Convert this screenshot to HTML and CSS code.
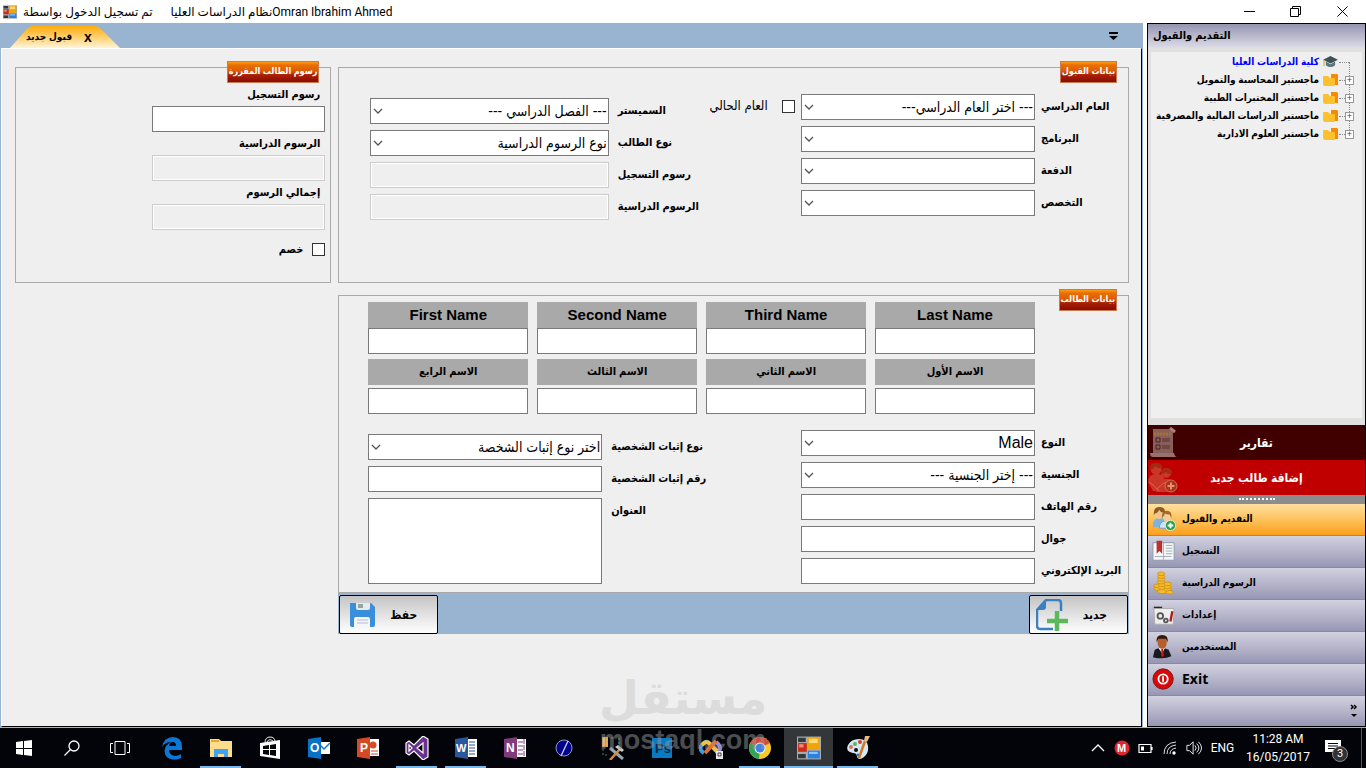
FILE: index.html
```html
<!DOCTYPE html>
<html lang="ar">
<head>
<meta charset="utf-8">
<title>نظام الدراسات العليا</title>
<link rel="stylesheet" href="styles.css">
</head>
<body>
<svg class="defs" aria-hidden="true">
  <defs>
    <symbol id="chevron" viewBox="0 0 10 6"><path d="M1 1l4 4 4-4" fill="none" stroke="#555" stroke-width="1.3"/></symbol>
    <symbol id="forms" viewBox="0 0 22 21">
      <path d="M0 0h22v21H0z" fill="#a8aaac"/><path d="M1 1h7v4H1zM1 16h7v4H1z" fill="#33383c"/>
      <path d="M1 6h8v8H1z" fill="#cf2b12"/><path d="M2 7h4v3H2z" fill="#f08a74"/>
      <path d="M10 1h11v11H10z" fill="#f0a40c"/><path d="M11 2h8v4h-8z" fill="#ffdb76"/>
      <path d="M10 13h11v7H10z" fill="#2d7fe0"/><path d="M11 14h8v2h-8z" fill="#8cc4ff"/>
    </symbol>
    <symbol id="folder" viewBox="0 0 15 12"><path d="M8 0h6l1 1v10h-7z" fill="#f58a07"/><path d="M0 3q0-1 1-1h4l2 2h4q1 0 1 1v6q0 1-1 1H2q-2 0-2-2z" fill="#ffc02d"/></symbol>
    <symbol id="people" viewBox="0 0 26 26">
      <path d="M1 19q0-6 6-7h4q5 1 5 8l-3 2H1z" fill="#7fb2dc"/><path d="M8 23q0-7 6-8h3q6 1 6 8z" fill="#cfe5f7" stroke="#6e9fcd"/>
      <ellipse cx="8" cy="7" rx="4.500" ry="6" fill="#f3c58d"/><path d="M2 9Q1 0 8 0t6 7l-2-1q-3 0-4-3-2 4-5 4z" fill="#8d5b20"/>
      <ellipse cx="16" cy="11" rx="4" ry="5" fill="#f6cc98"/><path d="M11 12q-1-8 5-8t5 8l-2-4q-4 0-5-1-1 3-3 5z" fill="#a2692a"/>
      <circle cx="20" cy="20" r="5.500" fill="#26a148" stroke="#d9f2d9"/><path d="M17 20h6M20 17v6" stroke="#fff" stroke-width="2"/>
    </symbol>
  </defs>
</svg>

<header class="titlebar">
  <svg class="app-icon"><use href="#forms"/></svg>
  <span class="title-user" dir="rtl">تم تسجيل الدخول بواسطة</span>
  <h1 class="title-name"><bdi>نظام الدراسات العليا</bdi><span>Omran Ibrahim Ahmed</span></h1>
  <div class="window-controls">
    <button type="button" aria-label="Minimize"><svg viewBox="0 0 11 11"><path d="M0 5.500h11" stroke="#000"/></svg></button>
    <button type="button" aria-label="Restore"><svg viewBox="0 0 11 11"><path d="M.5 2.500h8v8h-8zM2.500 2.500v-2h8v8h-2" fill="none" stroke="#000"/></svg></button>
    <button type="button" aria-label="Close"><svg viewBox="0 0 11 11"><path d="M.5.500l10 10M10.500.500l-10 10" stroke="#000"/></svg></button>
  </div>
</header>

<div class="workspace">
  <main class="document">
    <div class="tabstrip">
      <div class="tab">
        <svg class="tab-shape" viewBox="0 0 110 22" preserveAspectRatio="none" aria-hidden="true">
          <defs><linearGradient id="tabfill" x2="0" y2="1"><stop offset="0" stop-color="#ffab0c"/><stop offset=".45" stop-color="#ffcb62"/><stop offset="1" stop-color="#fff5da"/></linearGradient></defs>
          <path d="M0 22L17 3q3-3 6-3h62q3 0 6 3l19 19z" fill="url(#tabfill)"/>
        </svg>
        <span dir="rtl">قبول جديد</span>
        <button type="button" aria-label="إغلاق">x</button>
      </div>
      <button type="button" class="tab-menu" aria-label="القائمة"><svg viewBox="0 0 9 8"><path d="M0 1h9" stroke="#000" stroke-width="2"/><path d="M0 4h9L4.500 8z"/></svg></button>
    </div>

    <form class="page" dir="rtl">
      <fieldset class="group admission">
        <legend>بيانات القبول</legend>
        <div class="rows side">
          <label for="year">العام الدراسي</label>
          <div class="combo"><select id="year"><option>--- اختر العام الدراسي---</option></select><svg><use href="#chevron"/></svg></div>
          <label for="program">البرنامج</label>
          <div class="combo"><select id="program"><option></option></select><svg><use href="#chevron"/></svg></div>
          <label for="batch">الدفعة</label>
          <div class="combo"><select id="batch"><option></option></select><svg><use href="#chevron"/></svg></div>
          <label for="major">التخصص</label>
          <div class="combo"><select id="major"><option></option></select><svg><use href="#chevron"/></svg></div>
        </div>
        <label class="check current-year"><input type="checkbox">العام الحالي</label>
        <div class="rows term">
          <label for="semester">السميستر</label>
          <div class="combo"><select id="semester"><option>--- الفصل الدراسي ---</option></select><svg><use href="#chevron"/></svg></div>
          <label for="kind">نوع الطالب</label>
          <div class="combo"><select id="kind"><option>نوع الرسوم الدراسية</option></select><svg><use href="#chevron"/></svg></div>
          <label for="regfee">رسوم التسجيل</label>
          <input id="regfee" type="text" disabled>
          <label for="studyfee">الرسوم الدراسية</label>
          <input id="studyfee" type="text" disabled>
        </div>
      </fieldset>

      <fieldset class="group fees">
        <legend>رسوم الطالب المقررة</legend>
        <label for="fee1">رسوم التسجيل</label>
        <input id="fee1" type="text">
        <label for="fee2">الرسوم الدراسية</label>
        <input id="fee2" type="text" disabled>
        <label for="fee3">إجمالي الرسوم</label>
        <input id="fee3" type="text" disabled>
        <label class="check discount"><input type="checkbox">خصم</label>
      </fieldset>

      <div class="student-block">
        <fieldset class="group student">
          <legend>بيانات الطالب</legend>
          <div class="names">
            <div class="name"><label for="en4">Last Name</label><input id="en4" type="text"></div>
            <div class="name"><label for="en3">Third Name</label><input id="en3" type="text"></div>
            <div class="name"><label for="en2">Second Name</label><input id="en2" type="text"></div>
            <div class="name"><label for="en1">First Name</label><input id="en1" type="text"></div>
            <div class="name spaced"><label for="ar1">الاسم الأول</label><input id="ar1" type="text"></div>
            <div class="name spaced"><label for="ar2">الاسم الثاني</label><input id="ar2" type="text"></div>
            <div class="name spaced"><label for="ar3">الاسم الثالث</label><input id="ar3" type="text"></div>
            <div class="name spaced"><label for="ar4">الاسم الرابع</label><input id="ar4" type="text"></div>
          </div>
          <div class="details">
            <div class="rows side">
              <label for="gender">النوع</label>
              <div class="combo"><select id="gender" class="latin"><option>Male</option></select><svg><use href="#chevron"/></svg></div>
              <label for="nation">الجنسية</label>
              <div class="combo"><select id="nation"><option>--- إختر الجنسية ---</option></select><svg><use href="#chevron"/></svg></div>
              <label for="phone">رقم الهاتف</label>
              <input id="phone" type="text">
              <label for="mobile">جوال</label>
              <input id="mobile" type="text">
              <label for="email">البريد الإلكتروني</label>
              <input id="email" type="text">
            </div>
            <div class="rows identity">
              <label for="idkind">نوع إثبات الشخصية</label>
              <div class="combo"><select id="idkind"><option>اختر نوع إثبات الشخصة</option></select><svg><use href="#chevron"/></svg></div>
              <label for="idnum">رقم إثبات الشخصية</label>
              <input id="idnum" type="text">
              <label for="address">العنوان</label>
              <textarea id="address"></textarea>
            </div>
          </div>
        </fieldset>
        <div class="actions">
          <button type="button"><span>جديد</span>
            <svg viewBox="0 0 32 32"><path d="M17 30H4q-3 0-3-3V11L10 1h12q3 0 3 3v8" fill="none" stroke="#3a80c4" stroke-width="2.500"/><path d="M1 11L10 1v7q0 3-3 3z" fill="#3a80c4"/><path d="M21 12v20M11 22h21" stroke="#5cb85c" stroke-width="4.500"/></svg>
          </button>
          <button type="button"><span>حفظ</span>
            <svg viewBox="0 0 32 32"><path d="M4 4h21l4 4v18q0 2-2 2H6q-2 0-2-2z" fill="#3a8fdd"/><path d="M10 4h14v5q0 2-2 2H12q-2 0-2-2z" fill="#e4ebea"/><path d="M12 5h5v4h-5z" fill="#92a5a3"/><path d="M8 28V20q0-2 2-2h12q2 0 2 2v8z" fill="#f3f5f6"/><path d="M11 21h11M11 24h11" stroke="#bbc"/></svg>
          </button>
        </div>
      </div>
    </form>
  </main>

  <aside class="sidebar">
    <h2 dir="rtl">التقديم والقبول</h2>
    <ul class="tree" dir="rtl">
      <li class="root"><i></i><svg class="hat" viewBox="0 0 16 13"><path d="M0 4l8-4 8 4-8 4z" fill="#3c5256"/><path d="M3 6l5 3 5-3v4q-5 4-10 0z" fill="#57777c"/><path d="M1 4v7" stroke="#d09b3c"/></svg><a href="#">كلية الدراسات العليا</a></li>
      <li><button type="button" aria-label="توسيع">+</button><svg><use href="#folder"/></svg><span>ماجستير المحاسبة والتمويل</span></li>
      <li><button type="button" aria-label="توسيع">+</button><svg><use href="#folder"/></svg><span>ماجستير المختبرات الطبية</span></li>
      <li><button type="button" aria-label="توسيع">+</button><svg><use href="#folder"/></svg><span>ماجستير الدراسات المالية والمصرفية</span></li>
      <li><button type="button" aria-label="توسيع">+</button><svg><use href="#folder"/></svg><span>ماجستير العلوم الادارية</span></li>
    </ul>
    <button type="button" class="command reports">
      <svg viewBox="0 0 30 32"><path d="M5 2h20v26H5z" fill="#875f5b"/><path d="M2 26h24q1 4 3 4H5q-3 0-3-4z" fill="#9a716b"/><path d="M6 7h17" stroke="#a9713a" stroke-width="3" stroke-dasharray="2 1"/><path d="M14 12h8M14 14h8M14 19h8M14 21h8" stroke="#5d2f2f"/><path d="M8 11h4v4H8zM8 18h4v4H8z" fill="none" stroke="#4c1f1f"/><path d="M22 1l5 4" stroke="#aa8176" stroke-width="3"/></svg>
      <span>تقارير</span>
    </button>
    <button type="button" class="command add">
      <svg viewBox="0 0 30 32"><g fill="#ca3727"><circle cx="8" cy="7" r="5.500"/><circle cx="18" cy="11" r="5"/><path d="M0 20q0-7 7-8h4q4 1 5 4l-4 13H5z"/><path d="M8 30q0-12 8-13h5q5 1 6 8l-8 5z"/></g><path d="M2 8Q1 1 8 1t6 5q-5 1-6-2-2 3-6 4zM13 12q0-7 6-6t5 6q-5 0-6-2-2 2-5 2z" fill="#a52a14"/><path d="M1 20q5 3 10 9M9 27q5-6 12-8" fill="none" stroke="#e2604c"/><circle cx="23" cy="24" r="6" fill="#a73519" stroke="#d56c50"/><path d="M19.500 24h7M23 20.500v7" stroke="#ec8a72" stroke-width="2"/></svg>
      <span>إضافة طالب جديد</span>
    </button>
    <div class="splitter"></div>
    <nav>
      <button type="button" class="active"><svg viewBox="0 0 26 26"><use href="#people"/></svg><span>التقديم والقبول</span></button>
      <button type="button"><svg viewBox="0 0 26 26"><path d="M1 4h23v19H1z" fill="#f6f7f9" stroke="#8d98a6"/><path d="M12.500 4v19" stroke="#aab"/><path d="M15 7h7M15 10h7M15 13h7M15 16h7M3 19h18" stroke="#9aa7b5"/><path d="M5 2h6v14l-3-3-3 3z" fill="#bf2f30"/></svg><span>التسجيل</span></button>
      <button type="button"><svg viewBox="0 0 26 26"><g fill="#f5bc2a" stroke="#c78511" stroke-width=".7"><ellipse cx="11" cy="22" rx="5" ry="2.500"/><ellipse cx="6" cy="19" rx="4" ry="2"/><ellipse cx="6" cy="16" rx="4" ry="2"/><ellipse cx="11" cy="18" rx="4" ry="2"/><ellipse cx="11" cy="15" rx="4" ry="2"/><ellipse cx="10" cy="12" rx="4" ry="2"/><ellipse cx="10" cy="9" rx="4" ry="2"/><ellipse cx="10" cy="6" rx="4" ry="2"/><ellipse cx="10" cy="3" rx="4" ry="2"/><ellipse cx="17" cy="20" rx="4" ry="2"/><ellipse cx="17" cy="17" rx="4" ry="2"/><ellipse cx="17" cy="14" rx="4" ry="2"/><ellipse cx="19" cy="23" rx="4" ry="2"/></g></svg><span>الرسوم الدراسية</span></button>
      <button type="button"><svg viewBox="0 0 26 26"><path d="M2 4h9v3H2z" fill="#292929"/><path d="M2 6h22l-1 17H3z" fill="#eeeeee" stroke="#aaa"/><g fill="none" stroke="#555" stroke-width="2"><circle cx="9" cy="14" r="3"/><circle cx="15" cy="19" r="2"/></g><path d="M22 9l-2 11" stroke="#b01818" stroke-width="2.500"/></svg><span>إعدادات</span></button>
      <button type="button"><svg viewBox="0 0 26 26"><path d="M1 24l2-8 7-3 8 3 3 7q-8 4-20 1z" fill="#181a1f"/><path d="M7 14l4 6 3-6z" fill="#fff"/><path d="M10 15h2l1 7-2 2-1-2z" fill="#c91717"/><ellipse cx="11" cy="8" rx="5" ry="7" fill="#b65f2c"/><path d="M5 8Q4 0 11 0t6 8l-2-4H7z" fill="#33170d"/></svg><span>المستخدمين</span></button>
      <button type="button" class="exit"><svg viewBox="0 0 26 26"><circle cx="12" cy="13" r="11" fill="#d70909" stroke="#7b1212"/><circle cx="12" cy="13" r="5" fill="none" stroke="#fff" stroke-width="2"/><path d="M12 10v6" stroke="#fff" stroke-width="2"/></svg><span>Exit</span></button>
    </nav>
    <div class="overflow"><button type="button" aria-label="المزيد"><svg viewBox="0 0 8 14"><path d="M1 1l2 2-2 2M4 1l2 2-2 2" fill="none" stroke="#000" stroke-width="1.500"/><path d="M1 10h6l-3 3z"/></svg></button></div>
  </aside>
</div>

<footer class="taskbar">
  <div class="system">
    <button type="button" aria-label="Start"><svg viewBox="0 0 16 16"><path d="M0 2l7-1v7H0zM8 1l8-1v8H8zM0 9h7v6l-7-1zM8 9h8v7l-8-1z" fill="#fff"/></svg></button>
    <button type="button" aria-label="Search"><svg viewBox="0 0 16 16"><circle cx="10" cy="6" r="5" fill="none" stroke="#fff" stroke-width="1.300"/><path d="M6.500 9.500L.5 15.500" stroke="#fff" stroke-width="1.300"/></svg></button>
    <button type="button" aria-label="Task view"><svg class="wide" viewBox="0 0 20 14"><path d="M5 .5h10v13H5zM3 2.500H.5v9H3M17 2.500h2.500v9H17" fill="none" stroke="#fff"/></svg></button>
  </div>
  <div class="apps">
    <button type="button" aria-label="Edge"><svg viewBox="0 0 24 24"><path d="M2 11Q4 1 13 1q9 0 9 10v3H9q0 5 6 6 3 0 6-2v4q-4 2-8 1.500Q5 23 4.500 15 5 9 11 6q-6 0-9 5zM9 10h7q0-4-3-4t-4 4z" fill="#0b78d5" fill-rule="evenodd"/></svg></button>
    <button type="button" class="running" aria-label="Explorer"><svg viewBox="0 0 24 24"><path d="M1 3h9l2 2h11v16H1z" fill="#fbdd8c"/><path d="M2 4h8v2H2z" fill="#e5aa2a"/><path d="M5 21v-8h14v8h-4v-3H9v3z" fill="#40a3ec"/></svg></button>
    <button type="button" aria-label="Store"><svg viewBox="0 0 24 24"><path d="M2 7l20-3v19L2 20z" fill="#fff"/><path d="M7 7Q7 1 12 1t5 5M9 6q2-4 6-1" fill="none" stroke="#eee"/><path d="M5 10l6-1v4H5zM12 9l6-1v5h-6zM5 14h6v5l-6-1zM12 14h6v6l-6-1z" fill="#050609"/></svg></button>
    <button type="button" aria-label="Outlook"><svg viewBox="0 0 24 24"><path d="M10 6h13v12H10z" fill="#fff"/><path d="M12 8l5 5 6-6" stroke="#1976c8" stroke-width="1.500" fill="none"/><path d="M1 3l13-2v22L1 21z" fill="#0872c8"/><text x="3" y="16" font-size="12">O</text></svg></button>
    <button type="button" aria-label="PowerPoint"><svg viewBox="0 0 24 24"><path d="M10 3h13v17H10z" fill="#fff"/><circle cx="17" cy="9" r="3.500" fill="#d84b27"/><path d="M15 15h7M15 18h7" stroke="#d84b27"/><path d="M1 3l13-2v22L1 21z" fill="#d54a22"/><text x="4" y="16" font-size="12">P</text></svg></button>
    <button type="button" class="running" aria-label="Visual Studio"><svg viewBox="0 0 24 24"><path d="M18 0l5 3v18l-5 3-9-9-5 4-3-2V7l3-2 5 4zM4 9v6l3-3zM18 7l-6 5 6 5z" fill="#6b3190" stroke="#fff" stroke-width="1.200"/></svg></button>
    <button type="button" class="running" aria-label="Word"><svg viewBox="0 0 24 24"><path d="M10 3h13v18H10z" fill="#fff"/><path d="M15 6h6M15 9h6M15 12h6M15 15h6M15 18h6" stroke="#2b5797"/><path d="M1 3l13-2v22L1 21z" fill="#2b579a"/><text x="2" y="16" font-size="11">W</text></svg></button>
    <button type="button" aria-label="OneNote"><svg viewBox="0 0 24 24"><path d="M10 3h13v18H10z" fill="#fff"/><path d="M15 6h5M15 10h5M15 14h5M15 18h5M21 3v18" stroke="#80397b" stroke-dasharray="5 1"/><path d="M1 3l13-2v22L1 21z" fill="#80397b"/><text x="3" y="16" font-size="12">N</text></svg></button>
    <button type="button" aria-label="Designer"><svg viewBox="0 0 24 24"><circle cx="12" cy="12" r="8" fill="#03038e" stroke="#8a9ac2"/><path d="M16 5L9 20" stroke="#c9d3ee" stroke-width="1.300"/></svg></button>
    <button type="button" aria-label="Tools"><svg viewBox="0 0 24 24"><path d="M1 1h6v10H1z" fill="#f1a43a"/><path d="M2 2h2v8H2z" fill="#ffe0a0"/><path d="M10 2h8v6M2 13v6h6" fill="none" stroke="#488652" stroke-dasharray="2 2"/><path d="M9 12l13 11" stroke="#94a6b5" stroke-width="3"/><path d="M20 12L9 24" stroke="#cf8e43" stroke-width="2.500"/><path d="M14 11l3-2 6 5-2 2z" fill="#c3cdd5"/></svg></button>
    <button type="button" aria-label="Photoshop"><svg viewBox="0 0 24 24"><path d="M2 2h20v20H2z" fill="#087bc4"/><text class="dark" x="5" y="17" font-size="13">Ps</text></svg></button>
    <button type="button" aria-label="Studio tools"><svg viewBox="0 0 24 24"><g fill="none" stroke-width="4"><path d="M17 6q4 3 4 6t-4 6" stroke="#9b8ee0"/><path d="M5 17q-7-4 0-10 3-3 6 1l6 7" stroke="#3f9be5"/><path d="M3 9q4-5 8-1l7 7" stroke="#f5c344"/><path d="M6 17l11-12" stroke="#ee6a25"/></g><path d="M17 15h7v8h-7z" fill="#e8e8e8"/><path d="M19 17h3v3h-3z" fill="none" stroke="#444"/></svg></button>
    <button type="button" class="running" aria-label="Chrome"><svg viewBox="0 0 24 24"><circle cx="12" cy="12" r="11" fill="#f9c928"/><path d="M12 12L2 7Q6 1 12 1t10 6z" fill="#dc4936"/><path d="M12 12l-1 11Q1 21 1 12q0-3 1-5z" fill="#35a255"/><circle cx="12" cy="12" r="5.500" fill="#fff"/><circle cx="12" cy="12" r="4.500" fill="#3e83e9"/></svg></button>
    <button type="button" class="running current" aria-label="Forms"><svg viewBox="0 0 24 24"><use href="#forms"/></svg></button>
    <button type="button" class="running" aria-label="Paint"><svg viewBox="0 0 24 24"><path d="M2 9Q5 3 13 3t9 7q1 7-4 11t-7 0q0-4-4-4-8-1-5-8z" fill="#d5e7f0"/><circle cx="10" cy="14" r="2" fill="#111"/><circle cx="5" cy="11" r="2" fill="#e07060"/><circle cx="9" cy="8" r="2" fill="#55b75c"/><circle cx="14" cy="6" r="2" fill="#d83b2e"/><circle cx="12" cy="19" r="1.500" fill="#226fd1"/><path d="M13 22l6-17" stroke="#d07827" stroke-width="2.500"/><path d="M18 5l1-5h5l-3 6z" fill="#e6bc83"/></svg></button>
  </div>
  <div class="tray">
    <svg viewBox="0 0 16 16"><path d="M2 11l6-6 6 6" fill="none" stroke="#fff" stroke-width="1.300"/></svg>
    <svg viewBox="0 0 16 16"><circle cx="8" cy="8" r="7.500" fill="#de2630"/><text x="3" y="12" font-size="11">M</text></svg>
    <svg viewBox="0 0 16 16"><path d="M1 4.500h12v8H1zM14 7v3" fill="none" stroke="#fff" stroke-width="1.200"/><path d="M3 6.500h3v4H3z" fill="#fff"/></svg>
    <svg viewBox="0 0 16 16"><g fill="none" stroke="#ddd"><path d="M2 14Q2 3 14 2M5 14q0-8 9-9M8 14q0-5 6-6"/></g><circle cx="12" cy="13" r="1.700" fill="#fff"/></svg>
    <svg viewBox="0 0 18 16"><path d="M1 5h3l4-4v14l-4-4H1zM10 5q3 3 0 6M12 3q5 5 0 10M14 1q7 7 0 14" fill="none" stroke="#fff"/></svg>
    <span class="language">ENG</span>
    <div class="clock"><time>11:28 AM</time><time>16/05/2017</time></div>
    <button type="button" class="notice" aria-label="Notifications"><svg viewBox="0 0 16 16"><path d="M0 0h16v12h-4v4l-4-4H0z" fill="#fff"/><path d="M3 3.500h10M3 6h10M3 8.500h7" stroke="#05070b"/></svg><span>3</span></button>
  </div>
</footer>
<div class="watermark" aria-hidden="true"><b dir="rtl">مستقل</b><span>mostaql.com</span></div>
</body>
</html>
```

FILE: styles.css
```css
* { box-sizing: border-box; }
body { margin: 0; height: 100vh; display: flex; flex-direction: column; overflow: hidden; position: relative; background: #fff; color: #000; font: 12px/16px "Liberation Sans", "DejaVu Sans Condensed", "DejaVu Sans", sans-serif; }
button { font: inherit; color: inherit; background: none; border: 0; padding: 0; margin: 0; }
svg { display: block; flex: none; }
.defs { position: absolute; width: 0; height: 0; }

.titlebar { flex: none; height: 23px; display: flex; align-items: center; padding: 0 12px 0 3px; font: 12px/20px Roboto, "DejaVu Sans", sans-serif; }
.app-icon { width: 14px; height: 14px; }
.title-user { margin-left: 6px; }
.title-name { margin: 0 0 0 18px; font: inherit; }
.window-controls { margin-left: auto; display: flex; }
.window-controls button { width: 46px; height: 22px; display: flex; justify-content: center; align-items: center; }
.window-controls button:last-child { width: 24px; margin-left: 12px; }
.window-controls svg { width: 11px; height: 11px; }

.workspace { flex: 1; min-height: 0; display: flex; gap: 4px; border-bottom: 1px solid #99b4d1; }
.document { flex: 1; min-width: 0; display: flex; flex-direction: column; border: solid #99b4d1; border-width: 0 1px; }
.tabstrip { flex: none; height: 25px; display: flex; justify-content: space-between; align-items: flex-end; padding: 0 24px 0 9px; background: #99b4d1; }
.tab { position: relative; width: 110px; height: 22px; display: flex; align-items: center; gap: 12px; padding-left: 16px; font-size: 10px; font-weight: bold; }
.tab-shape { position: absolute; inset: 0; width: 100%; height: 100%; }
.tab span, .tab button { position: relative; }
.tab button { font: bold 14px/16px "Liberation Sans", sans-serif; }
.tab-menu { align-self: center; }
.tab-menu svg { width: 9px; height: 8px; }

.page { flex: 1; min-height: 0; display: grid; grid-template-columns: minmax(0, 5fr) minmax(0, 2fr); align-content: start; gap: 12px 7px; padding: 18px 12px 0 13px; background: #efefef; border: solid #000; border-width: 0 1px 1px 0; border-top: 1px solid #fff; border-left: 1px solid #fff; font-size: 11px; font-weight: bold; }
.group { position: relative; min-width: 0; margin: 0; padding: 0; border: 1px solid #a9a9a9; }
.group legend { position: absolute; top: -7px; right: 11px; padding: 0 1px; height: 22px; font-size: 9px; line-height: 18px; color: #fff; white-space: nowrap; background: linear-gradient(#ff9a1a, #e87000 15%, #dc5b08 45%, #a82105 65%, #8a0b00); border: 1px solid #c87a50; }
.page label { white-space: nowrap; }
.page input[type="text"], .page select, .page textarea { display: block; width: 100%; height: 26px; margin: 0; padding: 0 1px; border: 1px solid #7a7a7a; border-radius: 0; background: #fff; color: #000; font: 14px/20px "Liberation Sans", "DejaVu Sans Condensed", "DejaVu Sans", sans-serif; resize: none; }
.page input[type="text"]:disabled { background: #efefef; border-color: #ccc; box-shadow: inset 0 0 0 1px #fff; }
.page select { appearance: none; }
.page select.latin { font-size: 16px; }
.combo { position: relative; min-width: 0; }
.combo svg { position: absolute; left: 3px; top: 10px; width: 10px; height: 6px; pointer-events: none; }
.check { display: flex; align-items: center; gap: 14px; }
.check input { appearance: none; flex: none; width: 13px; height: 13px; margin: 0; border: 1px solid #333; background: #fff; }

.rows { display: grid; align-items: center; align-content: start; gap: 6px; }
.rows label { text-align: left; line-height: 24px; height: 26px; }
.side { grid-template-columns: 83px minmax(0, 1fr); }
.admission { height: 216px; display: grid; grid-template-columns: minmax(0, 323fr) 78px minmax(0, 340fr); align-items: start; column-gap: 6px; padding: 26px 4px 0 31px; }
.current-year { height: 24px; font-size: 13px; font-weight: normal; }
.term { grid-template-columns: 93px minmax(0, 1fr); column-gap: 9px; padding-top: 4px; }

.fees { display: flex; flex-direction: column; align-items: flex-start; padding: 18px 5px 0; }
.fees > label { padding-right: 5px; line-height: 17px; margin-bottom: 3px; }
.fees > input[type="text"] { width: 57%; margin-bottom: 3px; }
.fees > .discount { padding: 0; margin-top: 8px; gap: 9px; }

.student-block { grid-column: 1; }
.student { height: 298px; padding: 6px 4px 0 29px; }
.names { display: grid; grid-template-columns: repeat(4, minmax(0, 1fr)); gap: 5px 9px; margin-right: 89px; }
.name label { display: block; height: 26px; line-height: 26px; text-align: center; background: #a9a9a9; font-size: 15px; }
.name.spaced label { font-size: 11px; line-height: 24px; margin-bottom: 3px; }
.details { display: grid; grid-template-columns: minmax(0, 323fr) minmax(0, 352fr); column-gap: 81px; margin-top: 16px; }
.identity { grid-template-columns: 109px minmax(0, 1fr); column-gap: 9px; padding-top: 4px; align-items: start; }
.page .identity textarea { height: 86px; }
.actions { display: flex; justify-content: space-between; padding: 2px 1px 0; background: #99b4d1; font-size: 12px; }
.actions button { width: 99px; height: 39px; display: flex; align-items: center; justify-content: space-between; padding: 0 20px 0 6px; border: 1px solid #000; border-radius: 2px; background: linear-gradient(#c4c4c4, #fff); }
.actions svg { width: 32px; height: 32px; }

.sidebar { flex: none; width: 219px; display: flex; flex-direction: column; border: 1px solid #000; background: #e0e0e0; }
.sidebar h2 { margin: 0; height: 24px; padding: 0 5px; font-size: 11px; line-height: 22px; text-align: left; background: linear-gradient(#9594b1, #dddde8); }
.tree { position: relative; flex: 1; min-height: 0; margin: 4px 3px 7px; padding: 1px 8px 0; list-style: none; background: #efefef; font-size: 10px; font-weight: bold; }
.tree::before { content: ""; position: absolute; right: 12px; top: 10px; height: 72px; border-right: 1px dotted #888; }
.tree li { position: relative; height: 18px; display: flex; align-items: center; white-space: nowrap; }
.tree svg { width: 15px; height: 12px; margin: 0 7px 0 4px; }
.tree i { flex: none; width: 9px; }
.tree li::before { content: ""; position: absolute; right: 5px; width: 10px; border-top: 1px dotted #888; }
.tree button { flex: none; position: relative; width: 9px; height: 9px; border: 1px solid #999; background: #fff; color: #1a3f99; font: 9px/7px "Liberation Sans", sans-serif; }
.tree a { color: #00f; text-decoration: none; }
.command { flex: none; height: 35px; display: grid; grid-template-columns: 32px 1fr 32px; align-items: center; color: #fff; font-size: 12px; font-weight: bold; }
.command svg { width: 30px; height: 32px; }
.reports { background: #400000; }
.add { background: #c00000; }
.splitter { flex: none; height: 9px; background: #8c8c8c; display: flex; justify-content: center; }
.splitter::before { content: ""; width: 36px; height: 0; margin-top: 3px; border-top: 2px dotted #fff; }
nav { display: flex; flex-direction: column; }
nav button { height: 32px; display: flex; align-items: center; gap: 6px; padding: 0 0 2px 4px; border-bottom: 1px solid #8c8c8c; background: linear-gradient(#d2d2e0, #9897b4); font-size: 10px; font-weight: bold; }
nav svg { width: 24px; height: 26px; }
nav .active { background: linear-gradient(#ffe0a0, #fdc25c 50%, #fb9f1c); }
nav .exit { font: bold 14px/20px "Open Sans", sans-serif; }
.overflow { flex: none; height: 30px; display: flex; justify-content: flex-end; align-items: center; padding-right: 7px; background: linear-gradient(#d2d2e0, #9897b4); }
.overflow svg { width: 8px; height: 14px; }

.taskbar { flex: none; height: 40px; display: flex; background: #020409; color: #fff; font: 12px/18px Roboto, sans-serif; }
.taskbar text { fill: #fff; font-family: "Liberation Sans", sans-serif; font-weight: bold; }
.taskbar text.dark { fill: #062a46; }
.system, .apps { display: flex; }
.system button { width: 48px; display: flex; align-items: center; justify-content: center; }
.system svg { width: 16px; height: 16px; }
.system svg.wide { width: 20px; height: 14px; }
.apps { padding-left: 3px; }
.apps button { position: relative; width: 49px; display: flex; align-items: center; justify-content: center; }
.apps svg { width: 24px; height: 24px; }
.running::after { content: ""; position: absolute; bottom: 0; left: 4px; right: 4px; height: 2px; background: #76b9ed; }
.current { background: #34373a; }
.current::after { left: 0; right: 0; }
.tray { margin-left: auto; display: flex; align-items: center; gap: 8px; margin-right: 4px; padding-right: 12px; border-right: 1px solid #555; }
.tray svg { width: 16px; height: 16px; }
.language { width: 25px; text-align: center; }
.clock { display: flex; flex-direction: column; width: 70px; text-align: center; }
.notice { position: relative; width: 24px; height: 20px; margin-left: 4px; }
.notice span { position: absolute; left: 7px; top: 8px; width: 16px; height: 16px; border: 1px solid #888; border-radius: 50%; background: #303236; font-size: 11px; line-height: 14px; }

.watermark { position: absolute; left: 50%; bottom: 8px; width: 176px; transform: translateX(-50%); display: flex; flex-direction: column; align-items: center; pointer-events: none; color: rgba(150, 150, 150, .5); font: bold 27px/28px "Liberation Sans", sans-serif; }
.watermark b { color: #dcdcdc; font: bold 46px/56px "DejaVu Sans", sans-serif; }
.watermark span { height: 34px; }
```
